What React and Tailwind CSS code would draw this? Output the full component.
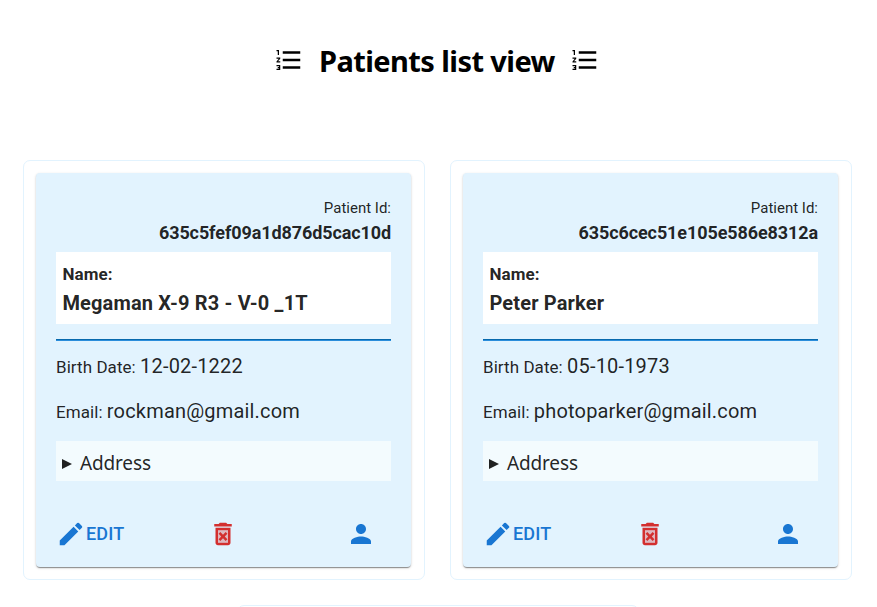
import React from "react";
import { MdEdit, MdPerson, MdFormatListNumbered } from "react-icons/md";

const patients = [
  { id: "635c5fef09a1d876d5cac10d", name: "Megaman X-9 R3 - V-0 _1T", birth: "12-02-1222", email: "rockman@gmail.com" },
  { id: "635c6cec51e105e586e8312a", name: "Peter Parker", birth: "05-10-1973", email: "photoparker@gmail.com" },
];

function TrashIcon({ className }) {
  return (
    <svg className={className} viewBox="0 0 24 24" fill="currentColor">
      <path d="M8 9h8v10H8z" opacity=".3" />
      <path d="M15.5 4l-1-1h-5l-1 1H5v2h14V4zM6 19c0 1.1.9 2 2 2h8c1.1 0 2-.9 2-2V7H6v12zM8 9h8v10H8V9z" />
      <path d="M14.12 10.47 12 12.59l-2.13-2.12-1.41 1.41L10.59 14l-2.12 2.12 1.41 1.41L12 15.41l2.12 2.12 1.41-1.41L13.41 14l2.12-2.12z" />
    </svg>
  );
}

function PatientCard({ id, name, birth, email }) {
  return (
    <div className="h-[420px] w-[402px] rounded-[7px] border border-[#e2f3fe] px-3 pt-3">
      <article className="flex h-[394px] w-[375px] flex-col rounded bg-[#e2f3fe] px-5 pt-6 text-black/87 shadow-[0_2px_1px_-1px_rgba(0,0,0,0.25),0_1px_1px_0_rgba(0,0,0,0.18),0_1px_3px_0_rgba(0,0,0,0.16)]">
        <div className="h-[22px] text-right text-[15px] leading-[22px]">Patient Id:</div>
        <div className="h-[33px] text-right text-lg leading-7 font-bold tracking-[-0.1px]">{id}</div>
        <div className="h-[72px] shrink-0 bg-white pt-2 pl-[6.4px]">
          <div className="text-[17px] leading-[28px] font-bold tracking-[0.1px]">Name:</div>
          <div className="text-[20px] leading-[30px] font-bold tracking-[0.16px]">{name}</div>
        </div>
        <div className="mt-[15px] h-0.5 shrink-0 border-t border-[#0769ad] bg-[#2b8ddb]" />
        <div className="mt-[10px] h-[30px] text-[17px] leading-[30px] tracking-[0.06px]">
          Birth Date: <span className="text-[20px] tracking-[0.18px]">{birth}</span>
        </div>
        <div className="mt-[15px] h-[30px] text-[17px] leading-[30px] tracking-[0.06px]">
          Email: <span className="text-[20px] tracking-[0.18px]">{email}</span>
        </div>
        <div className="mt-[15px] flex h-10 shrink-0 items-center bg-[#f3fbfe] pl-[6.4px]">
          <svg className="mt-1.5 h-[10px] w-[10px]" viewBox="0 0 10 10" fill="currentColor"><path d="M0 0 10 5 0 10Z" /></svg>
          <span className="mt-1 ml-[7.6px] font-['Noto_Sans',sans-serif] text-[19px] leading-7 tracking-[-0.15px]">Address</span>
        </div>
        <div className="mt-[38px] flex h-[30px] items-center justify-between text-[#1976d2]">
          <button className="flex w-[68px] items-center text-lg font-medium tracking-[0.2px]">
            <MdEdit size={30} className="shrink-0" />EDIT
          </button>
          <TrashIcon className="mr-[24px] size-[30px] text-[#d32f2f]" />
          <MdPerson size={30} className="mr-[15px]" />
        </div>
      </article>
    </div>
  );
}

export default function App() {
  return (
    <main className="h-[607px] w-[877px] overflow-hidden bg-white font-[Roboto,sans-serif]">
      <h1 className="flex h-[160px] items-start pt-[38px] pl-[274px] font-['Noto_Sans',sans-serif] text-[29px] leading-[46px] font-bold text-black">
        <MdFormatListNumbered size={30} className="mt-[7px] shrink-0" />
        <span className="ml-[15px] w-[251px] whitespace-nowrap tracking-[-0.58px]">Patients list view</span>
        <MdFormatListNumbered size={30} className="mt-[7px] shrink-0" />
      </h1>
      <section className="flex flex-wrap justify-center gap-[25px] pr-0.5">
        {patients.map((p) => <PatientCard key={p.id} {...p} />)}
        <div className="h-[420px] w-[402px] rounded-[7px] border border-[#e2f3fe]" />
      </section>
    </main>
  );
}
